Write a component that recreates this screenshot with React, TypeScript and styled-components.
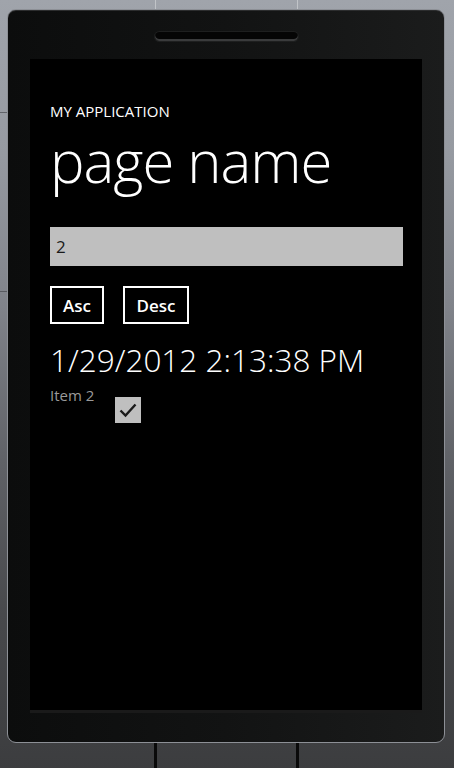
import React from "react";
import styled, { createGlobalStyle } from "styled-components";

const Global = createGlobalStyle`
  html, body { margin: 0; padding: 0; }
  body { background: #3b3c3e; font-family: "Open Sans", "Noto Sans", sans-serif; }
`;

const Backdrop = styled.div`
  width: 454px;
  height: 768px;
  overflow: hidden;
  display: flex;
  flex-direction: column;
  background:
    linear-gradient(to right, transparent 155px, rgba(255,255,255,0.35) 155px, rgba(255,255,255,0.35) 156px, transparent 156px, transparent 297px, rgba(255,255,255,0.35) 297px, rgba(255,255,255,0.35) 298px, transparent 298px) top / 100% 9px no-repeat,
    linear-gradient(to bottom, transparent 112px, rgba(60,62,66,0.6) 112px, rgba(60,62,66,0.6) 113px, transparent 113px, transparent 291px, rgba(60,62,66,0.6) 291px, rgba(60,62,66,0.6) 292px, transparent 292px) left / 7px 100% no-repeat,
    linear-gradient(to bottom, #a0a4ab 0%, #969aa1 20%, #80838a 40%, #606267 60%, #48494c 80%, #3c3d3f 100%);
`;

const Phone = styled.div`
  margin: 9px 0 0 7px;
  width: 438px;
  height: 734px;
  box-sizing: border-box;
  border: 1px solid #8d9096;
  border-radius: 9px;
  background: linear-gradient(to right, #0c0d0d 0%, #121313 50%, #1b1c1c 100%);
  box-shadow: inset 0 1px 0 #2c2d2e;
  display: flex;
  flex-direction: column;
  align-items: flex-start;
  flex-shrink: 0;
`;

const Speaker = styled.div`
  margin: 22px 0 0 147px;
  width: 143px;
  height: 9px;
  border-radius: 5px;
  background: #050505;
  box-shadow: inset 0 -2px 0 #3a3b3c, 0 0 0 1px #1e1f1f;
`;

const Screen = styled.div`
  margin: 18px 0 0 22px;
  width: 392px;
  height: 654px;
  background: #000;
  box-sizing: border-box;
  border-bottom: 3px solid #1a1a1a;
  padding: 42px 0 0 20px;
  display: flex;
  flex-direction: column;
  align-items: flex-start;
  color: #fff;
`;

const AppTitle = styled.div`
  font-size: 15px;
  line-height: 20px;
`;

const PageTitle = styled.div`
  font-size: 58px;
  font-weight: 300;
  line-height: 64px;
  margin-top: 8px;
  letter-spacing: -1px;
`;

const TextBox = styled.div`
  margin-top: 34px;
  width: 353px;
  height: 39px;
  background: #bfbfbf;
  color: #1a1a1a;
  font-size: 17px;
  line-height: 39px;
  padding-left: 6px;
  box-sizing: border-box;
`;

const ButtonRow = styled.div`
  display: flex;
  gap: 19px;
  margin-top: 20px;
`;

const Button = styled.button<{ $w: number }>`
  width: ${(p) => p.$w}px;
  height: 38px;
  box-sizing: border-box;
  border: 2px solid #fff;
  background: #000;
  color: #fff;
  font-family: "Open Sans", "Noto Sans", sans-serif;
  font-weight: 600;
  font-size: 17px;
  padding: 0;
  display: flex;
  align-items: center;
  justify-content: center;
`;

const DateText = styled.div`
  margin-top: 16px;
  font-size: 31.5px;
  font-weight: 300;
  line-height: 40px;
`;

const ItemRow = styled.div`
  display: flex;
  align-items: flex-start;
  margin-top: 6px;
`;

const ItemLabel = styled.div`
  color: #9a9a9a;
  font-size: 15px;
  line-height: 18px;
`;

const Check = styled.div`
  margin: 11px 0 0 21px;
  width: 26px;
  height: 26px;
  background: #bfbfbf;
  display: flex;
  align-items: center;
  justify-content: center;
`;

const Keys = styled.div`
  display: flex;
  flex: 1;
  padding-left: 154px;
`;

const KeyDivider = styled.div<{ $gap: number }>`
  width: 3px;
  background: #0a0a0a;
  margin-left: ${(p) => p.$gap}px;
`;

export default function App() {
  return (
    <>
      <Global />
      <Backdrop>
        <Phone>
          <Speaker />
          <Screen>
            <AppTitle>MY APPLICATION</AppTitle>
            <PageTitle>page name</PageTitle>
            <TextBox>2</TextBox>
            <ButtonRow>
              <Button $w={54}>Asc</Button>
              <Button $w={66}>Desc</Button>
            </ButtonRow>
            <DateText>1/29/2012 2:13:38 PM</DateText>
            <ItemRow>
              <ItemLabel>Item 2</ItemLabel>
              <Check>
                <svg width="20" height="20" viewBox="0 0 20 20">
                  <path d="M2.5 10.5 L7.5 15.5 L17.5 4.5" fill="none" stroke="#1a1a1a" strokeWidth="2.4" />
                </svg>
              </Check>
            </ItemRow>
          </Screen>
        </Phone>
        <Keys>
          <KeyDivider $gap={0} />
          <KeyDivider $gap={139} />
        </Keys>
      </Backdrop>
    </>
  );
}
